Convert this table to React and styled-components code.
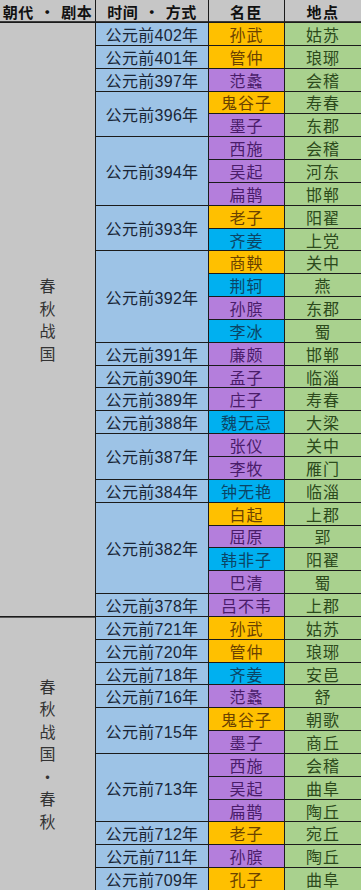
import React from "react";
import styled, { createGlobalStyle } from "styled-components";

const Global = createGlobalStyle`
  html, body { margin: 0; padding: 0; background: #ffffff; }
  body { font-family: "Noto Sans CJK SC", "Noto Sans", sans-serif; }
`;

const TONES = {
  o: { bg: "#ffc000", fg: "#6b4200" },
  p: { bg: "#b47edc", fg: "#4a1c6a" },
  b: { bg: "#00b0f0", fg: "#0b4566" },
};

const sections = [
  {
    label: ["春", "秋", "战", "国"],
    groups: [
      ["402", [["孙武", "o", "姑苏"]]],
      ["401", [["管仲", "o", "琅琊"]]],
      ["397", [["范蠡", "p", "会稽"]]],
      ["396", [["鬼谷子", "o", "寿春"], ["墨子", "p", "东郡"]]],
      ["394", [["西施", "p", "会稽"], ["吴起", "p", "河东"], ["扁鹊", "p", "邯郸"]]],
      ["393", [["老子", "o", "阳翟"], ["齐姜", "b", "上党"]]],
      ["392", [["商鞅", "o", "关中"], ["荆轲", "b", "燕"], ["孙膑", "p", "东郡"], ["李冰", "b", "蜀"]]],
      ["391", [["廉颇", "p", "邯郸"]]],
      ["390", [["孟子", "p", "临淄"]]],
      ["389", [["庄子", "p", "寿春"]]],
      ["388", [["魏无忌", "b", "大梁"]]],
      ["387", [["张仪", "p", "关中"], ["李牧", "p", "雁门"]]],
      ["384", [["钟无艳", "b", "临淄"]]],
      ["382", [["白起", "o", "上郡"], ["屈原", "p", "郢"], ["韩非子", "b", "阳翟"], ["巴清", "p", "蜀"]]],
      ["378", [["吕不韦", "p", "上郡"]]],
    ],
  },
  {
    label: ["春", "秋", "战", "国", "•", "春", "秋"],
    groups: [
      ["721", [["孙武", "o", "姑苏"]]],
      ["720", [["管仲", "o", "琅琊"]]],
      ["718", [["齐姜", "b", "安邑"]]],
      ["716", [["范蠡", "p", "舒"]]],
      ["715", [["鬼谷子", "o", "朝歌"], ["墨子", "p", "商丘"]]],
      ["713", [["西施", "p", "会稽"], ["吴起", "p", "曲阜"], ["扁鹊", "p", "陶丘"]]],
      ["712", [["老子", "o", "宛丘"]]],
      ["711", [["孙膑", "p", "陶丘"]]],
      ["709", [["孔子", "o", "曲阜"]]],
    ],
  },
];

const TOTAL_ROWS = sections.reduce(
  (n, s) => n + s.groups.reduce((m, g) => m + g[1].length, 0),
  0
);

const Table = styled.div`
  display: grid;
  grid-template-columns: 95px 112px 75px 76px;
  grid-template-rows: 22px repeat(${TOTAL_ROWS}, 1fr);
  gap: 1px;
  width: 361px;
  height: 890px;
  background: #1b1b1b;
  overflow: hidden;
`;

const Cell = styled.div`
  display: flex;
  align-items: center;
  justify-content: center;
  min-height: 0;
  overflow: hidden;
  white-space: nowrap;
  grid-column: ${(p) => p.$col};
  grid-row: ${(p) => p.$row} / span ${(p) => p.$span || 1};
`;

const HeaderCell = styled(Cell)`
  background: #c6c6c6;
  color: #111111;
  font-size: 15px;
  font-weight: 700;
  letter-spacing: ${(p) => (p.$tight ? "0.5px" : "1.5px")};
  box-shadow: inset 0 -1px 0 #3a3a3a;
`;

const Dot = styled.span`
  margin: 0 6px;
`;

const SectionCell = styled(Cell)`
  background: #c6c6c6;
  color: #333333;
  flex-direction: column;
  font-size: 16px;
  box-shadow: ${(p) => (p.$divider ? "inset 0 1px 0 #5a5a5a" : "none")};
`;

const LabelChar = styled.span`
  display: block;
  line-height: 22.5px;
  height: 22.5px;
`;

const YearCell = styled(Cell)`
  background: #9dc3e6;
  color: #1a2636;
  font-size: 16px;
  letter-spacing: 0.3px;
  font-family: "Liberation Sans", "Noto Sans CJK SC", sans-serif;
`;

const NameCell = styled(Cell)`
  background: ${(p) => TONES[p.$tone].bg};
  color: ${(p) => TONES[p.$tone].fg};
  font-size: 16px;
  letter-spacing: 1px;
`;

const PlaceCell = styled(Cell)`
  background: #a9d18e;
  color: #2c4a1c;
  font-size: 16px;
  letter-spacing: 1px;
`;

export default function App() {
  const cells = [];
  let row = 2;
  sections.forEach((sec, si) => {
    const count = sec.groups.reduce((m, g) => m + g[1].length, 0);
    cells.push(
      <SectionCell key={`s${si}`} $col={1} $row={row} $span={count} $divider={si > 0}>
        {sec.label.map((c, i) => (
          <LabelChar key={i}>{c}</LabelChar>
        ))}
      </SectionCell>
    );
    sec.groups.forEach(([year, items], gi) => {
      cells.push(
        <YearCell key={`y${si}-${gi}`} $col={2} $row={row} $span={items.length}>
          公元前{year}年
        </YearCell>
      );
      items.forEach(([name, tone, place], ii) => {
        cells.push(
          <NameCell key={`n${si}-${gi}-${ii}`} $col={3} $row={row + ii} $tone={tone}>
            {name}
          </NameCell>
        );
        cells.push(
          <PlaceCell key={`p${si}-${gi}-${ii}`} $col={4} $row={row + ii}>
            {place}
          </PlaceCell>
        );
      });
      row += items.length;
    });
  });

  return (
    <>
      <Global />
      <Table>
        <HeaderCell $col={1} $row={1} $tight>
          朝代<Dot>•</Dot>剧本
        </HeaderCell>
        <HeaderCell $col={2} $row={1} $tight>
          时间<Dot>•</Dot>方式
        </HeaderCell>
        <HeaderCell $col={3} $row={1}>名臣</HeaderCell>
        <HeaderCell $col={4} $row={1}>地点</HeaderCell>
        {cells}
      </Table>
    </>
  );
}
